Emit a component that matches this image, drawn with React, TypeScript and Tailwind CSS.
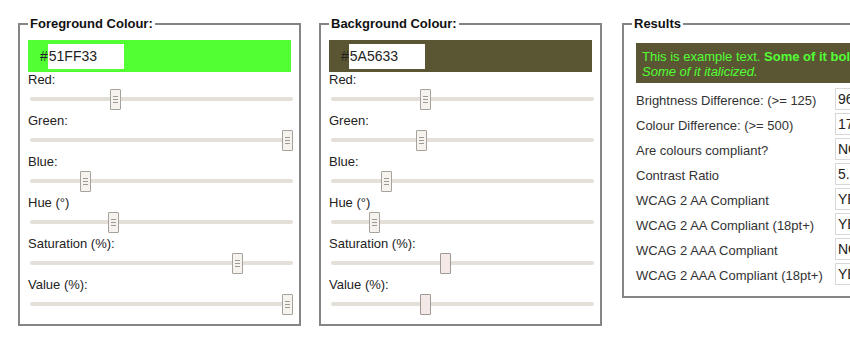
import React from "react";

interface SliderProps {
  label: string;
  value: number;
  grip?: boolean;
}

function Slider({ label, value, grip = true }: SliderProps) {
  return (
    <div>
      <div className="h-[15px]">{label}</div>
      <div className="relative ml-[2px] h-[26px] w-[263px]">
        <div className="absolute left-0 right-0 top-[10px] h-[4px] rounded-full bg-[#e4e0d9]" />
        <div
          className={
            grip
              ? "absolute top-[2px] flex h-[21px] w-[11px] flex-col items-center justify-center gap-[2px] rounded-[1px] border border-[#a5a29c] bg-[#f6f3ee]"
              : "absolute top-[2px] h-[21px] w-[11px] rounded-[1px] border border-[#9d9a96] bg-[#f4e9e6]"
          }
          style={{ left: Math.round(value * 252) }}
        >
          {grip && (
            <>
              <span className="h-px w-[5px] bg-[#9c9a95]" />
              <span className="h-px w-[5px] bg-[#9c9a95]" />
              <span className="h-px w-[5px] bg-[#9c9a95]" />
            </>
          )}
        </div>
      </div>
    </div>
  );
}

interface ColourPanelProps {
  title: string;
  hex: string;
  swatch: string;
  values: number[];
  plain?: boolean[];
  className?: string;
}

const labels = ["Red:", "Green:", "Blue:", "Hue (°)", "Saturation (%):", "Value (%):"];

function ColourPanel({ title, hex, swatch, values, plain = [], className = "" }: ColourPanelProps) {
  return (
    <fieldset className={"h-[310px] w-[283px] min-w-0 shrink-0 border-2 border-[#858585] px-[8px] pt-[9px] " + className}>
      <legend className="px-[2px] text-[13px] font-bold leading-[15px] text-[#111]">{title}</legend>
      <div className={"flex h-[32px] items-center pl-[12px] " + swatch}>
        <span className="text-[14px] text-[#222]">#</span>
        <input
          readOnly
          defaultValue={hex}
          className="h-[25px] w-[76px] bg-white pl-[1px] text-[14px] text-[#222] outline-none"
        />
      </div>
      {labels.map((l, i) => (
        <Slider key={l} label={l} value={values[i]} grip={!plain[i]} />
      ))}
    </fieldset>
  );
}

const results: [string, string][] = [
  ["Brightness Difference: (>= 125)", "96"],
  ["Colour Difference: (>= 500)", "178"],
  ["Are colours compliant?", "NO"],
  ["Contrast Ratio", "5.58"],
  ["WCAG 2 AA Compliant", "YES"],
  ["WCAG 2 AA Compliant (18pt+)", "YES"],
  ["WCAG 2 AAA Compliant", "NO"],
  ["WCAG 2 AAA Compliant (18pt+)", "YES"],
];

export default function App() {
  return (
    <div className="flex h-[350px] w-[850px] items-start overflow-hidden bg-white pl-[18px] pt-[16px] font-['Liberation_Sans',Arial,sans-serif] text-[13px] leading-[15px] text-[#222]">
      <ColourPanel
        title="Foreground Colour:"
        hex="51FF33"
        swatch="bg-[#51FF33]"
        values={[81 / 255, 1, 0.2, 111.2 / 360, 0.8, 1]}
      />
      <ColourPanel
        title="Background Colour:"
        hex="5A5633"
        swatch="bg-[#5A5633]"
        values={[90 / 255, 86 / 255, 0.2, 53.8 / 360, 0.433, 90 / 255]}
        plain={[false, false, false, false, true, true]}
        className="ml-[18px]"
      />
      <fieldset className="ml-[20px] h-[282px] w-[290px] min-w-0 shrink-0 border-2 border-[#858585] pl-[12px] pt-[12px]">
        <legend className="ml-[-4px] px-[2px] text-[13px] font-bold leading-[15px] text-[#111]">Results</legend>
        <div className="w-[262px] bg-[#5A5633] pb-[4px] pl-[6px] pt-[6px] text-[#51FF33]">
          This is example text. <b>Some of it bold.</b>
          <br />
          <i>Some of it italicized.</i>
        </div>
        <div className="mt-[3px]">
          {results.map(([label, value]) => (
            <div key={label} className="flex h-[25px] items-center">
              <span className="w-[199px] pt-[3px] text-[#333]">{label}</span>
              <input
                readOnly
                defaultValue={value}
                className="h-[22px] w-[60px] border border-[#d8d8d8] px-[2px] text-[14px] text-[#222] outline-none"
              />
            </div>
          ))}
        </div>
      </fieldset>
    </div>
  );
}
